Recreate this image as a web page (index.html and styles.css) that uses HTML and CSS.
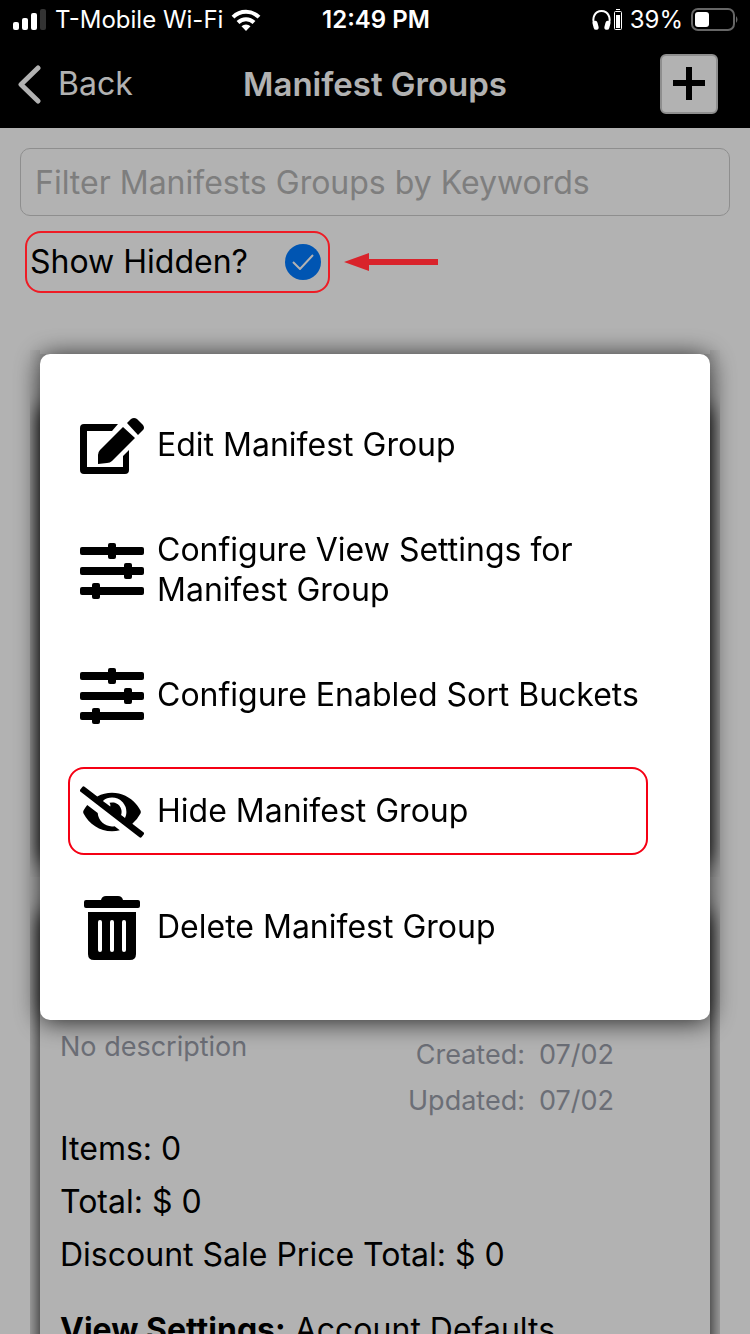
FILE: index.html
```html
<!DOCTYPE html>
<html lang="en">
<head>
  <meta charset="UTF-8">
  <title>Manifest Groups</title>
  <meta name="viewport" content="width=device-width, initial-scale=1.0">
  <link rel="stylesheet" href="styles.css">
</head>
<body>
  <div class="screen">
    <div class="status-bar">
      <div class="status-left">
        <svg class="signal" width="34" height="22" viewBox="0 0 34 22" aria-hidden="true">
          <rect x="0" y="13" width="6" height="8" rx="2" fill="#fff"/>
          <rect x="9" y="9" width="6" height="12" rx="2" fill="#fff"/>
          <rect x="18" y="4" width="6" height="17" rx="2" fill="#fff"/>
          <rect x="27" y="0" width="6" height="21" rx="2" fill="#333"/>
        </svg>
        <span>T-Mobile Wi-Fi</span>
        <svg width="30" height="22" viewBox="0 0 30 22" aria-hidden="true">
          <g fill="none" stroke="#fff" stroke-width="4">
            <path d="M2 8.200a18.500 18.500 0 0 1 26 0"/>
            <path d="M7 13.500a11.500 11.500 0 0 1 16 0"/>
          </g>
          <path d="M10.500 17.300a6.500 6.500 0 0 1 9 0L15 22z" fill="#fff"/>
        </svg>
      </div>
      <strong class="clock">12:49 PM</strong>
      <div class="status-right">
        <svg width="30" height="22" viewBox="0 0 30 22" aria-hidden="true">
          <path d="M3 17C-1 9 3 2 9.500 2S20 9 16 17" fill="none" stroke="#fff" stroke-width="2"/>
          <rect x="1" y="12" width="5" height="9" rx="2.500" fill="#fff" transform="rotate(-15 3 16)"/>
          <rect x="13" y="12" width="5" height="9" rx="2.500" fill="#fff" transform="rotate(15 16 16)"/>
          <path d="M24 .500h4" stroke="#fff"/>
          <rect x="22.500" y="2.500" width="7" height="18" rx="1" fill="none" stroke="#fff"/>
          <rect x="24" y="6" width="4" height="13" fill="#fff"/>
        </svg>
        <span>39%</span>
        <svg width="48" height="24" viewBox="0 0 48 24" aria-hidden="true">
          <rect x="1" y="1" width="42" height="21" rx="6" fill="none" stroke="#666" stroke-width="2"/>
          <rect x="4" y="4" width="14" height="15" rx="3" fill="#fff"/>
          <path d="M45 8q3 3.500 0 7z" fill="#666"/>
        </svg>
      </div>
    </div>

    <div class="navbar">
      <a class="back" href="#">
        <svg width="24" height="40" viewBox="0 0 24 40" aria-hidden="true">
          <path d="M20 4L3 20.500L20 37" fill="none" stroke="#fff" stroke-width="5" stroke-linecap="round" stroke-linejoin="round"/>
        </svg>
        Back
      </a>
      <h1>Manifest Groups</h1>
      <button class="add-btn" aria-label="Add group">
        <svg width="32" height="34" viewBox="0 0 32 34" aria-hidden="true">
          <path d="M16 0v33M0 16h32" stroke="#000" stroke-width="6"/>
        </svg>
      </button>
    </div>

    <div class="content">
      <input type="text" class="filter" placeholder="Filter Manifests Groups by Keywords" aria-label="Filter">

      <div class="hidden-row">
        <label for="showHidden">Show Hidden?</label>
        <input type="checkbox" id="showHidden" checked>
        <svg class="tick" width="22" height="16" viewBox="0 0 22 16" aria-hidden="true">
          <path d="M1 8l7 7L21 1" fill="none" stroke="#fff" stroke-width="2"/>
        </svg>
        <div class="callout"></div>
        <svg class="arrow" width="94" height="18" viewBox="0 0 94 18" aria-hidden="true">
          <path d="M0 9L25 0V6H94V12H25V18z" fill="#d9232b"/>
        </svg>
      </div>

      <div class="group-list">
        <div class="group-item group-item-end"><div class="card"></div></div>
        <div class="group-item"><div class="card card-collapsed"></div></div>
        <div class="group-item">
          <div class="card">
            <div class="card-top">
              <p class="description">No description</p>
              <dl class="dates">
                <dt>Created:</dt><dd>07/02</dd>
                <dt>Updated:</dt><dd>07/02</dd>
              </dl>
            </div>
            <p>Items: 0</p>
            <p>Total: $ 0</p>
            <p>Discount Sale Price Total: $ 0</p>
            <p class="settings"><strong>View Settings:</strong> Account Defaults</p>
          </div>
        </div>
      </div>
    </div>
  </div>

  <div class="overlay">
    <div class="menu" role="dialog" aria-label="Group actions">
      <button class="menu-item">
        <svg width="64" height="56" viewBox="0 0 64 56" aria-hidden="true">
          <path d="M38 6H4Q0 6 0 10V52Q0 56 4 56H45Q49 56 49 52V32L43 38V49H7V13H32z"/>
          <path d="M43 9L55 20L32 43Q30 45 27 45L18 46V37Q18 34 20 32z"/>
          <path d="M47 5L51 1Q54-1 57 1L63 7Q65 10 63 12L58 17z"/>
        </svg>
        <span>Edit Manifest Group</span>
      </button>
      <button class="menu-item">
        <svg width="64" height="56" viewBox="0 0 64 56" aria-hidden="true">
          <rect y="4" width="64" height="8" rx="2"/>
          <rect y="24" width="64" height="8" rx="2"/>
          <rect y="44" width="64" height="8" rx="2"/>
          <rect x="28" width="8" height="16" rx="2"/>
          <rect x="44" y="20" width="8" height="16" rx="2"/>
          <rect x="12" y="40" width="8" height="16" rx="2"/>
        </svg>
        <span>Configure View Settings for Manifest Group</span>
      </button>
      <button class="menu-item">
        <svg width="64" height="56" viewBox="0 0 64 56" aria-hidden="true">
          <rect y="4" width="64" height="8" rx="2"/>
          <rect y="24" width="64" height="8" rx="2"/>
          <rect y="44" width="64" height="8" rx="2"/>
          <rect x="28" width="8" height="16" rx="2"/>
          <rect x="44" y="20" width="8" height="16" rx="2"/>
          <rect x="12" y="40" width="8" height="16" rx="2"/>
        </svg>
        <span>Configure Enabled Sort Buckets</span>
      </button>
      <button class="menu-item">
        <svg width="64" height="52" viewBox="0 0 640 512" aria-hidden="true">
          <path d="M320 400c-75.850 0-137.250-58.710-142.900-133.110L72.200 185.820c-13.790 17.300-26.480 35.590-36.720 55.590a32.350 32.350 0 0 0 0 29.190C89.710 376.410 197.070 448 320 448c26.910 0 52.870-4 77.890-10.460L346 397.390a144.130 144.130 0 0 1-26 2.610zm313.820 58.100l-110.550-85.440a331.250 331.250 0 0 0 81.250-102.070 32.350 32.350 0 0 0 0-29.190C550.290 135.590 442.930 64 320 64a308.150 308.150 0 0 0-147.320 37.700L45.460 3.370A16 16 0 0 0 23 6.180L3.370 31.450A16 16 0 0 0 6.180 53.900l588.360 454.730a16 16 0 0 0 22.460-2.810l19.640-25.270a16 16 0 0 0-2.820-22.450zm-183.720-142l-39.300-30.380A94.750 94.750 0 0 0 416 256a94.760 94.760 0 0 0-121.310-92.210A47.650 47.650 0 0 1 304 192a46.640 46.640 0 0 1-1.540 10l-73.610-56.890A142.310 142.310 0 0 1 320 112a143.920 143.920 0 0 1 144 144c0 21.630-5.290 41.790-13.900 60.110z"/>
        </svg>
        <span>Hide Manifest Group</span>
        <i class="callout callout-menu"></i>
      </button>
      <button class="menu-item">
        <svg width="64" height="64" viewBox="0 0 64 64" aria-hidden="true">
          <path d="M21 4Q22 0 26 0H38Q42 0 43 4H58Q60 4 60 6V10Q60 12 58 12H6Q4 12 4 10V6Q4 4 6 4z"/>
          <path d="M8 16H56V58Q56 64 50 64H14Q8 64 8 58z"/>
          <path d="M20 26V54M32 26V54M44 26V54" stroke="#fff" stroke-width="4" stroke-linecap="round"/>
        </svg>
        <span>Delete Manifest Group</span>
      </button>
    </div>
  </div>
</body>
</html>
```
FILE: styles.css
```css
* {
  box-sizing: border-box;
}

body {
  margin: 0;
  background: #fff;
  color: #000;
  font-family: Inter, "Liberation Sans", sans-serif;
  font-size: 32px;
  line-height: 40px;
}

h1, p, dl, dd {
  margin: 0;
}

svg {
  flex: none;
}

.screen {
  height: 100vh;
  overflow: hidden;
}

/* status bar */
.status-bar {
  display: grid;
  grid-template-columns: 1fr auto 1fr;
  align-items: center;
  height: 40px;
  padding: 0 11px 0 13px;
  background: #000;
  color: #fff;
  font-size: 24px;
}

.status-left,
.status-right {
  display: flex;
  align-items: center;
  gap: 8px;
}

.status-right {
  justify-content: flex-end;
}

.clock {
  font-weight: 600;
}

/* navbar */
.navbar {
  display: grid;
  grid-template-columns: 1fr auto 1fr;
  align-items: center;
  height: 88px;
  padding: 0 18px;
  background: #000;
  color: #fff;
}

.back {
  display: flex;
  align-items: center;
  gap: 16px;
  color: #fff;
  text-decoration: none;
}

.navbar h1 {
  font-size: 33px;
  font-weight: 600;
}

.add-btn {
  display: flex;
  align-items: center;
  justify-content: center;
  justify-self: end;
  width: 58px;
  height: 60px;
  margin-right: 14px;
  padding: 0;
  border: 2px solid #ccc;
  border-radius: 6px;
  background: #fff;
}

/* filter */
.content {
  padding: 20px 20px 0;
}

.filter {
  display: block;
  width: 100%;
  height: 68px;
  padding: 0 14px;
  border: 1px solid #ccc;
  border-radius: 10px;
  background: none;
  font: inherit;
}

.filter::placeholder {
  color: #b5b5b5;
}

.hidden-row {
  position: relative;
  display: flex;
  align-items: center;
  justify-content: space-between;
  width: 305px;
  height: 62px;
  margin: 15px 0 57px 5px;
  padding: 0 9px 0 5px;
}

#showHidden {
  appearance: none;
  width: 36px;
  height: 36px;
  margin: 0;
  border-radius: 50%;
  background: #007aff;
}

.tick {
  position: absolute;
  right: 16px;
  top: 23px;
  pointer-events: none;
}

.callout {
  position: absolute;
  inset: 0;
  z-index: 20;
  border: 2px solid #ee1c25;
  border-radius: 16px;
  pointer-events: none;
}

.arrow {
  position: absolute;
  left: 319px;
  top: 22px;
  z-index: 20;
}

/* group list */
.group-list {
  margin: 0 10px;
}

.group-item {
  padding: 36px 10px 14px;
  overflow: hidden;
}

.group-item-end {
  height: 21px;
  padding-top: 0;
}

.group-item-end .card {
  height: 4px;
  padding: 0;
}

.card {
  padding: 20px;
  background: #fff;
  box-shadow: 0 0 20px #000;
}

.card-collapsed {
  height: 456px;
}

.card p {
  margin-bottom: 13px;
}

.card-top {
  display: flex;
  justify-content: space-between;
  padding: 94px 76px 8px 0;
  color: #9a9eaa;
  font-size: 27px;
}

.dates {
  display: grid;
  grid-template-columns: auto auto;
  gap: 6px 14px;
  padding-top: 8px;
  text-align: right;
}

.card .settings {
  margin: 35px 0 20px;
}

/* popup menu */
.overlay {
  position: fixed;
  inset: 40px 0 0;
  z-index: 10;
  display: flex;
  align-items: center;
  padding: 0 40px;
  background: rgba(0, 0, 0, 0.3);
}

.menu {
  flex: 1;
  padding: 34px 40px;
  border-radius: 10px;
  background: #fff;
  box-shadow: 0 2px 26px rgba(0, 0, 0, 0.8);
}

.menu-item {
  position: relative;
  display: flex;
  align-items: center;
  gap: 13px;
  width: 100%;
  min-height: 116px;
  padding: 26px 0;
  border: none;
  background: none;
  color: #000;
  font: inherit;
  text-align: left;
}

.menu-item span {
  padding-bottom: 2px;
}

.callout-menu {
  inset: 13px 22px 15px -12px;
  border-color: #f50014;
}
```
